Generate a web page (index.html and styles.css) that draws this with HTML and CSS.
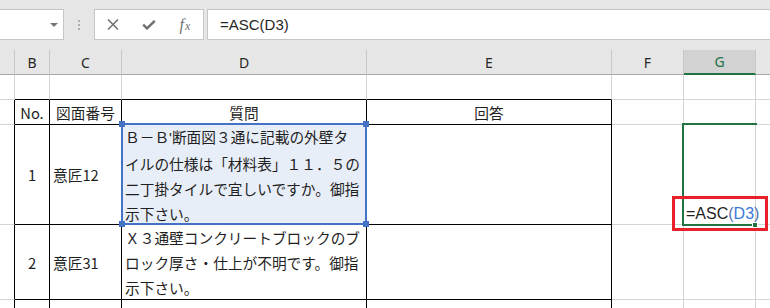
FILE: index.html
```html
<!DOCTYPE html>
<html lang="ja">
<head>
  <meta charset="UTF-8" />
  <title>ASC</title>
  <link rel="stylesheet" href="styles.css">
</head>
<body>

  <div class="formula-row">
    <div class="name-box"><span class="caret"></span></div>
    <div class="grip"><i></i><i></i><i></i></div>
    <div class="fx-buttons">
      <span class="btn">
        <svg width="12" height="11" viewBox="0 0 12 11"><path d="M1 0.5 L11 10.5 M11 0.5 L1 10.5" stroke="#707070" stroke-width="1.5" fill="none"/></svg>
      </span>
      <span class="btn">
        <svg width="14" height="10" viewBox="0 0 14 10"><path d="M1.2 4.6 L5 8.4 L12.8 0.8" stroke="#707070" stroke-width="2.4" fill="none"/></svg>
      </span>
      <span class="btn fx"><i>f</i><i class="sub">x</i></span>
    </div>
    <div class="formula-input">=ASC(D3)</div>
  </div>

  <div class="sheet">
    <!-- column headers -->
    <div class="hd"></div>
    <div class="hd">B</div>
    <div class="hd">C</div>
    <div class="hd">D</div>
    <div class="hd">E</div>
    <div class="hd">F</div>
    <div class="hd sel">G</div>
    <div class="hd"></div>

    <!-- row above the table -->
    <div class="c"></div>
    <div class="c tt"></div>
    <div class="c tt"></div>
    <div class="c tt"></div>
    <div class="c tt"></div>
    <div class="c"></div>
    <div class="c"></div>
    <div class="c"></div>

    <!-- table head -->
    <div class="c tl"></div>
    <div class="c tb ctr">No.</div>
    <div class="c tb ctr">図面番号</div>
    <div class="c tb ctr">質問</div>
    <div class="c tb ctr">回答</div>
    <div class="c"></div>
    <div class="c"></div>
    <div class="c"></div>

    <!-- row 1 -->
    <div class="c tl"></div>
    <div class="c tb ctr">1</div>
    <div class="c tb">意匠12</div>
    <div class="c tb ref">
      <div class="lines">
        <span>Ｂ－Ｂ<span class="ap">'</span>断面図３通に記載の外壁タ</span>
        <span>イルの仕様は「材料表」１１．５の</span>
        <span>二丁掛タイルで宜しいですか。御指</span>
        <span>示下さい。</span>
      </div>
      <div class="ref-box">
        <i class="h tl-h"></i><i class="h tr-h"></i><i class="h bl-h"></i><i class="h br-h"></i>
      </div>
    </div>
    <div class="c tb"></div>
    <div class="c"></div>
    <div class="c active">
      <span class="edit">=ASC<span class="par">(</span><span class="arg">D3</span><span class="par">)</span></span>
      <div class="cursor-box"><i class="fill"></i></div>
      <div class="annot"></div>
    </div>
    <div class="c"></div>

    <!-- row 2 -->
    <div class="c tl"></div>
    <div class="c tb ctr">2</div>
    <div class="c tb">意匠31</div>
    <div class="c tb">
      <div class="lines">
        <span>Ｘ３通壁コンクリートブロックのブ</span>
        <span>ロック厚さ・仕上が不明です。御指</span>
        <span>示下さい。</span>
      </div>
    </div>
    <div class="c tb"></div>
    <div class="c"></div>
    <div class="c"></div>
    <div class="c"></div>

    <!-- row 3 -->
    <div class="c tl"></div>
    <div class="c tb ctr">3</div>
    <div class="c tb"></div>
    <div class="c tb"></div>
    <div class="c tb"></div>
    <div class="c"></div>
    <div class="c"></div>
    <div class="c"></div>
  </div>

</body>
</html>
```

FILE: styles.css
```css
* {
  margin: 0; padding: 0; box-sizing: border-box;
}

body {
  width: 770px;
  height: 308px;
  overflow: hidden;
  background: #fff;
  font-family: "Noto Sans CJK JP", sans-serif;
  color: #1f1f1f;
}

/* formula bar */
.formula-row {
  height: 50px;
  background: #e6e6e6;
  display: flex;
  align-items: flex-start;
  padding-top: 9px;
}

.name-box {
  width: 65px;
  height: 31px;
  margin-left: -1px;
  background: #fff;
  border: 1px solid #c6c6c6;
  display: flex;
  justify-content: flex-end;
  align-items: center;
  padding-right: 5px;
}

.caret {
  width: 0;
  height: 0;
  border-left: 4px solid transparent;
  border-right: 4px solid transparent;
  border-top: 4px solid #777;
}

.grip {
  width: 30px;
  height: 31px;
  display: flex;
  flex-direction: column;
  align-items: center;
  justify-content: center;
  gap: 2px;
}

.grip i {
  width: 2px;
  height: 2px;
  background: #adadad;
}

.fx-buttons {
  width: 110px;
  height: 31px;
  background: #fff;
  border: 1px solid #c6c6c6;
  display: flex;
}

.btn {
  width: 36px;
  display: flex;
  align-items: center;
  justify-content: center;
}

.fx {
  font-family: "Liberation Serif", serif;
  font-style: italic;
  color: #707070;
  font-size: 16px;
}

.fx i { font-style: italic; }

.fx .sub {
  font-size: 12px;
  margin-top: 3px;
  margin-left: 1px;
}

.formula-input {
  flex: 1;
  margin-left: 3px;
  margin-right: -4px;
  height: 31px;
  background: #fff;
  border: 1px solid #c6c6c6;
  padding-left: 12px;
  font-family: "Liberation Sans", sans-serif;
  font-size: 15px;
  line-height: 29px;
  color: #262626;
}

/* sheet grid */
.sheet {
  display: grid;
  grid-template-columns: 15px 35px 72px 245px 245px 72px 72px 20px;
  grid-template-rows: 25px 25px 25px 100px 75px 25px;
}

.hd {
  background: #e6e6e6;
  border-right: 1px solid #c8c8c8;
  border-bottom: 1px solid #a8a8a8;
  font-family: "Noto Sans", sans-serif;
  font-size: 14px;
  color: #262626;
  display: flex;
  align-items: center;
  justify-content: center;
}

.hd.sel {
  background: #d2d2d2;
  color: #217346;
  border-bottom: 2px solid #217346;
}

.c {
  border-right: 1px solid #d4d4d4;
  border-bottom: 1px solid #d4d4d4;
  font-size: 14.7px;
  display: flex;
  align-items: center;
  padding-left: 3px;
  white-space: nowrap;
}

.c.tt { border-bottom-color: #000; }
.c.tl { border-right-color: #000; }
.c.tb { border-right-color: #000; border-bottom-color: #000; }

.c.ctr {
  justify-content: center;
  padding-left: 0;
}

.lines {
  display: flex;
  flex-direction: column;
  line-height: 25px;
}

.ap {
  font-family: "Liberation Sans", sans-serif;
}

/* range referenced by the formula */
.ref {
  position: relative;
  background: #e8eef8;
}

.ref-box {
  position: absolute;
  left: -1px;
  top: -2px;
  right: -1px;
  bottom: -1px;
  border: 2px solid #4472c4;
}

.ref-box .h {
  position: absolute;
  width: 6px;
  height: 6px;
  background: #4472c4;
}

.tl-h { left: -4px; top: -4px; }
.tr-h { right: -4px; top: -4px; }
.bl-h { left: -4px; bottom: -4px; }
.br-h { right: -4px; bottom: -4px; }

/* active cell being edited */
.active {
  position: relative;
  align-items: flex-end;
  padding-left: 2px;
}

.edit {
  font-family: "Liberation Sans", sans-serif;
  font-size: 16px;
  line-height: 21px;
  color: #1f1f1f;
}

.edit .par { color: #4f74b3; }
.edit .arg { color: #3b7ad8; }

.cursor-box {
  position: absolute;
  left: -2px;
  top: -2px;
  right: -2px;
  bottom: -2px;
  border: 2px solid #217346;
  border-right: 0;
}

.cursor-box .fill {
  position: absolute;
  right: -1px;
  bottom: -4px;
  width: 6px;
  height: 6px;
  background: #217346;
  border: 1px solid #fff;
}

.annot {
  position: absolute;
  left: -12px;
  top: 71px;
  width: 96px;
  height: 35px;
  border: 3px solid #e8202a;
}
```
